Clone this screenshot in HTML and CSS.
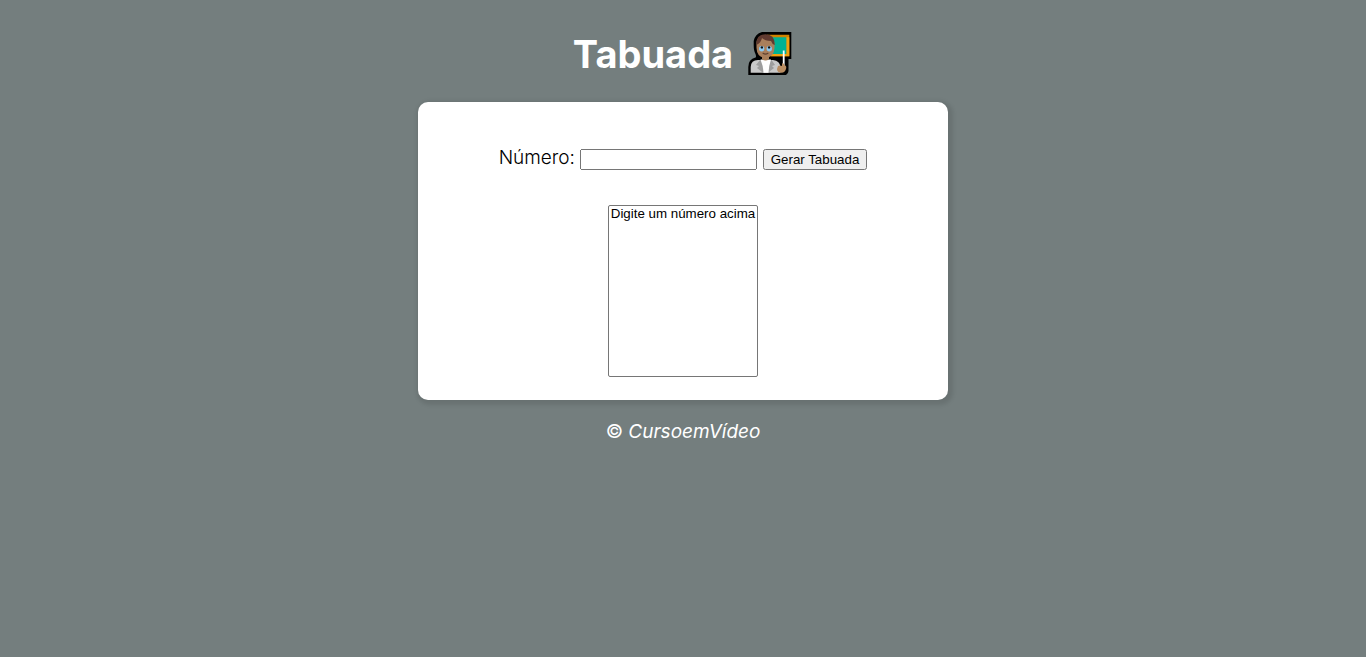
FILE: index.html
```html
<!DOCTYPE html>
<html lang="pt-br">
<head>
<meta charset="UTF-8">
<meta name="viewport" content="width=device-width, initial-scale=1.0">
<title>Tabuada</title>
<link rel="stylesheet" href="styles.css">
</head>
<body>
<header class="header">
  <h1 class="title">Tabuada
    <svg class="teacher" viewBox="0 0 46 46" aria-hidden="true">
      <path fill="#000" d="M15 1H44.3V28H41.5V40Q41.5 42 39 44H1.3V36Q1.3 28 8.5 26.5Q9.5 26 8.5 23Q6.7 20 6.7 14V10Q8 3 15 1Z"/>
      <path fill="#d08300" d="M20 3.7H42.3V25.3H22Z"/>
      <path fill="#f0a010" d="M39.3 6.3H42.3V25.3H24V23H39.3Z"/>
      <path fill="#00b294" d="M22 6.3H39.3V23H24Z"/>
      <path fill="#c9c9c9" d="M3.7 41.7V36Q4 29 11 29H26Q33 30 33.5 36V41.7Z"/>
      <path fill="#9d9d9d" d="M13 29L9 34L12 35L10 37L16 41.7H21L27 37L25 35L28 34L24.5 29Z"/>
      <path fill="#fff" d="M13.5 28.5H24Q22 34 21.5 41.7H16.5Q16 34 13.5 28.5Z"/>
      <path fill="#a97f59" d="M15 24H22V28Q18.5 31 15 28Z"/>
      <path fill="#a97f5c" d="M9.5 11Q10 5 18.5 5T27.5 12V17Q27 26.7 18.5 26.7T9.5 17Z"/>
      <path fill="#603a30" d="M9.4 14Q9 3.3 18.5 3.3Q28 3.5 27.7 14Q25 13 24 10Q18 10 15 7Q14 12 9.4 14Z"/>
      <circle fill="#8bc8f0" cx="14.7" cy="17.7" r="2.7"/>
      <circle fill="#8bc8f0" cx="22.3" cy="17.7" r="2.7"/>
      <circle fill="#111" cx="14.9" cy="16.4" r="1.2"/>
      <circle fill="#111" cx="22.1" cy="16.4" r="1.2"/>
      <path fill="none" stroke="#60402e" stroke-width="1.1" stroke-linecap="round" d="M16 22.3Q18.5 24 21 22.3"/>
      <path fill="none" stroke="#fff" stroke-width="1.8" d="M36.7 19.5V36"/>
      <path fill="#b98d62" d="M31 35Q33 34 35 35V32.5Q37 31.5 37.5 34Q40 35 39 38Q38 41.7 34.5 41.7Q30 41.5 30 38Z"/>
    </svg>
  </h1>
</header>
<main class="card">
  <div class="row"><label for="num">Número:</label> <input class="number" type="number" id="num"> <button class="generate" type="button">Gerar Tabuada</button></div>
  <div class="row"><select class="table" id="tab" size="10" aria-label="Tabuada"><option>Digite um número acima</option></select></div>
</main>
<footer class="footer">© <em>CursoemVídeo</em></footer>
</body>
</html>
```
FILE: styles.css
```css
body {
  margin: 0;
  background: #747e7e;
  font: 19px/24px Inter, sans-serif;
}

.header {
  color: white;
}

.title {
  display: flex;
  justify-content: center;
  align-items: center;
  gap: 14px;
  margin: 0;
  padding: 31px 0 25px;
  font-size: 38px;
  line-height: 46px;
}

.teacher {
  width: 46px;
  height: 46px;
}

.card {
  box-sizing: border-box;
  max-width: 530px;
  margin: auto;
  padding: 44px 16px 23px;
  border-radius: 10px;
  background: white;
  box-shadow: 2px 2px 4px 3px rgba(0, 0, 0, .1);
  text-align: center;
}

.row + .row {
  margin-top: 35px;
}

.number {
  box-sizing: border-box;
  width: 177px;
}

.table {
  vertical-align: bottom;
}

label {
  font-weight: 300;
}

.footer {
  margin: 20px 0;
  color: white;
  text-align: center;
}
```
